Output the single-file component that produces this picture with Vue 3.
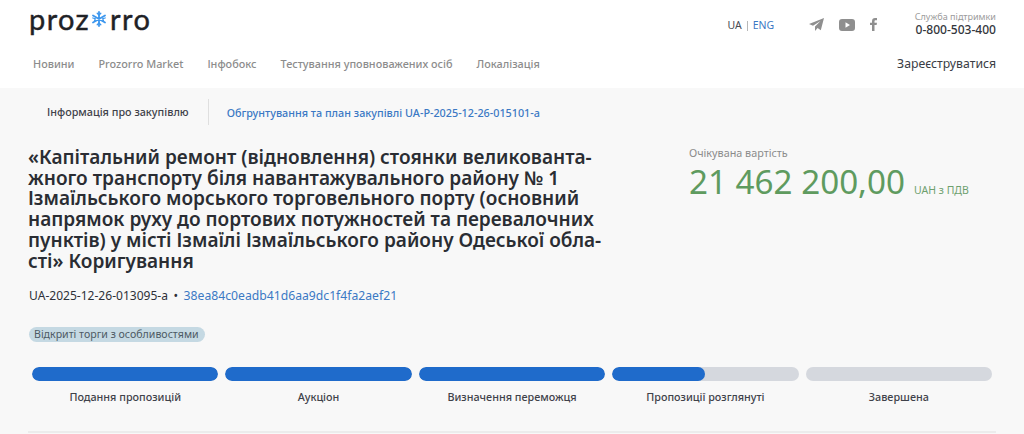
<script setup>
const nav = ['Новини', 'Prozorro Market', 'Інфобокс', 'Тестування уповноважених осіб', 'Локалізація']
const stages = [
  { name: 'Подання пропозицій', fill: 100 },
  { name: 'Аукціон', fill: 100 },
  { name: 'Визначення переможця', fill: 100 },
  { name: 'Пропозиції розглянуті', fill: 50 },
  { name: 'Завершена', fill: 0 }
]
</script>

<template>
  <div class="page">
    <header class="header">
      <div class="top">
        <div class="logo">
          <span>proz</span>
          <svg class="flake" width="16" height="16" viewBox="0 0 16 16" fill="none" stroke="#3d97ee" stroke-width="1.8" stroke-linecap="round">
            <path d="M8 1v14M2 4.500l12 7M14 4.500l-12 7" />
            <path d="M6.200 2.200L8 4l1.800-1.800M6.200 13.800L8 12l1.800 1.800M1.800 7l2.400.7-.7 2.300M14.200 7l-2.400.7.7 2.300" stroke-width="1.300" />
          </svg>
          <span>rro</span>
        </div>
        <div class="lang">
          <span>UA</span>
          <i></i>
          <a>ENG</a>
        </div>
        <div class="social">
          <svg width="15" height="13" viewBox="0 0 15 13"><path fill="#8f8f8f" d="M15 0L0 6l4 1.700L11.500 3 6 8.500V13l2.600-3 3.200 2.200z" /></svg>
          <svg width="16" height="12" viewBox="0 0 16 12"><path fill="#8f8f8f" fill-rule="evenodd" d="M3 0h10a3 3 0 0 1 3 3v6a3 3 0 0 1-3 3H3a3 3 0 0 1-3-3V3a3 3 0 0 1 3-3zm3.500 3.300v5.400L11 6z" /></svg>
          <svg width="7" height="13" viewBox="0 0 7 13"><path fill="#8f8f8f" d="M2 13V7H0V4.800h2V3.200C2 1 3.200 0 5 0h2v2.200H5.700c-.9 0-1.200.4-1.200 1.200v1.400H7L6.600 7H4.500v6z" /></svg>
        </div>
        <div class="support">
          <span>Служба підтримки</span>
          <b>0-800-503-400</b>
        </div>
      </div>
      <div class="menu">
        <nav class="nav">
          <a v-for="item in nav" :key="item">{{ item }}</a>
        </nav>
        <a class="register">Зареєструватися</a>
      </div>
    </header>

    <main class="main">
      <div class="tabs">
        <span class="tab-active">Інформація про закупівлю</span>
        <a class="tab-link">Обгрунтування та план закупівлі UA-P-2025-12-26-015101-a</a>
      </div>

      <div class="info">
        <div class="left">
          <h1>«Капітальний ремонт (відновлення) стоянки великованта&shy;жного транспорту біля навантажувального району № 1 Ізмаїльського морського торговельного порту (основний напрямок руху до портових потужностей та перевалочних пунктів) у місті Ізмаїлі Ізмаїльського району Одеської обла&shy;сті» Коригування</h1>
          <div class="ids">
            <span class="ua-id">UA-2025-12-26-013095-a</span>
            <span class="dot">•</span>
            <a>38ea84c0eadb41d6aa9dc1f4fa2aef21</a>
          </div>
          <span class="tag">Відкриті торги з особливостями</span>
        </div>
        <div class="price">
          <div class="price-label">Очікувана вартість</div>
          <div class="price-row">
            <span class="amount">21 462 200,00</span>
            <span class="vat">UAH з ПДВ</span>
          </div>
        </div>
      </div>

      <div class="stages">
        <div v-for="s in stages" :key="s.name" class="stage">
          <div class="bar">
            <div class="bar-fill" :style="{ width: s.fill + '%' }"></div>
          </div>
          <div class="stage-name">{{ s.name }}</div>
        </div>
      </div>

      <div class="rule"></div>
    </main>
  </div>
</template>

<style>
body {
  background: #f8f8f8;
  overflow: hidden;
}
</style>

<style scoped>
.page {
  font-family: "Noto Sans", "Open Sans", sans-serif;
  color: #2e3138;
}

.header {
  background: #fff;
  height: 88px;
  padding: 0 28px 0 29px;
}

.top {
  display: flex;
  align-items: flex-start;
  height: 47px;
}

.logo {
  display: flex;
  align-items: center;
  font-family: Lato, sans-serif;
  font-size: 29px;
  line-height: 38px;
  letter-spacing: 1.4px;
  -webkit-text-stroke: 0.4px #1f2226;
  color: #1f2226;
  width: 698px;
  margin-right: 3px;
}

.flake {
  margin: 0 3px 0 1px;
}

.lang {
  display: flex;
  align-items: center;
  gap: 5px;
  font-size: 10.5px;
  line-height: 15px;
  margin-top: 18px;
  width: 82px;
  color: #484b52;
}

.lang i {
  width: 1px;
  height: 10px;
  background: #b8b8b8;
}

.lang a {
  color: #3b78c4;
}

.social {
  display: flex;
  align-items: center;
  gap: 15px;
  margin-top: 17px;
  height: 15px;
  width: 106px;
}

.support {
  display: flex;
  flex-direction: column;
  align-items: flex-end;
  margin-top: 11px;
  flex: 1;
  white-space: nowrap;
}

.support span {
  font-size: 9.05px;
  line-height: 12px;
  color: #9b9b9b;
}

.support b {
  font-size: 12.05px;
  line-height: 13px;
  font-weight: 500;
  color: #33363c;
}

.menu {
  display: flex;
  justify-content: space-between;
  align-items: center;
  height: 32px;
}

.nav {
  display: flex;
  gap: 24px;
  margin-left: 4px;
}

.nav a {
  font-size: 10.85px;
  font-weight: 500;
  color: #8c8c8c;
}

.register {
  font-size: 12.25px;
  color: #3a3d44;
  margin-top: 1px;
}

.main {
  padding: 0 28px;
}

.tabs {
  display: flex;
  align-items: center;
  height: 48px;
  font-size: 10.8px;
  font-weight: 500;
}

.tab-active {
  padding: 0 19px;
  line-height: 26px;
  border-right: 1px solid #dfdfdf;
  color: #3f424a;
}

.tab-link {
  margin-left: 18px;
  color: #3b78c4;
}

.info {
  display: flex;
  justify-content: space-between;
  margin-top: 11px;
}

.left {
  width: 590px;
  padding-left: 1px;
}

h1 {
  margin: 0 0 0 -1px;
  font-size: 19.05px;
  line-height: 20.7px;
  font-weight: 600;
  color: #2a2d33;
  width: 575px;
}

.ids {
  display: flex;
  gap: 4.5px;
  margin-top: 16px;
  font-size: 12.2px;
  line-height: 17px;
}

.ua-id {
  font-size: 12.05px;
}

.ids a {
  color: #3b78c4;
}

.dot {
  margin: 0 1px;
}

.tag {
  display: inline-block;
  margin-top: 23px;
  padding: 0 6px 0 5px;
  font-size: 10.6px;
  line-height: 15px;
  border-radius: 8px;
  background: #c5d9e3;
  color: #4d5a63;
}

.price {
  width: 307px;
  margin-top: -2px;
}

.price-label {
  font-size: 10.8px;
  line-height: 16px;
  color: #8b8b8b;
}

.price-row {
  display: flex;
  align-items: baseline;
  gap: 9px;
}

.amount {
  font-size: 33.2px;
  line-height: 42px;
  color: #5f9b5f;
}

.vat {
  font-size: 10.5px;
  color: #6ea06e;
}

.stages {
  display: flex;
  gap: 7px;
  margin: 24px 4px 0;
}

.stage {
  flex: 1;
  min-width: 0;
}

.bar {
  height: 14px;
  border-radius: 7px;
  background: #d5d8de;
  overflow: hidden;
}

.bar-fill {
  height: 100%;
  border-radius: 7px;
  background: #1f6bcb;
}

.stage-name {
  margin-top: 8px;
  text-align: center;
  font-size: 10.8px;
  line-height: 15px;
  font-weight: 500;
  color: #3f424a;
}

.rule {
  height: 2px;
  background: #ececec;
  margin-top: 27px;
}
</style>
